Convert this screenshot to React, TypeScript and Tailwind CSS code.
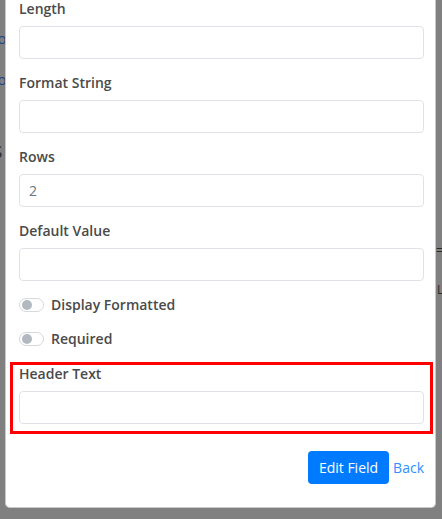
import React from "react";

const font = { fontFamily: '"Open Sans", "Noto Sans", sans-serif' };

function Field({ label, value }: { label: string; value?: string }) {
    return (
        <div className="mb-[13px]">
            <label className="block text-[14px] leading-[21px] font-semibold text-[#4a4a4a] mb-[7px]">{label}</label>
            <input
                readOnly
                value={value ?? ""}
                className="block w-full h-[33px] px-[9px] rounded-[4px] border border-[#dfe3e8] bg-white text-[14px] text-[#6c757d] outline-none"
            />
        </div>
    );
}

function Toggle({ label }: { label: string }) {
    return (
        <div className="mb-[13px] flex items-center h-[21px]">
            <span className="flex items-center w-[25px] h-[14px] px-[2px] rounded-full border border-[#d4d9de] bg-white">
                <span className="w-[10px] h-[10px] rounded-full bg-[#b3b9c0]" />
            </span>
            <span className="ml-[7px] text-[14px] font-semibold text-[#4a4a4a]">{label}</span>
        </div>
    );
}

export default function App() {
    return (
        <div className="relative w-[442px] h-[519px] overflow-hidden bg-[#808080]" style={font}>
            {/* page behind the backdrop, mostly hidden */}
            <span className="absolute left-[-12px] top-[27px] text-[15px] text-[#20407f]">Co</span>
            <span className="absolute left-[-12px] top-[68px] text-[15px] text-[#20407f]">Co</span>
            <span className="absolute left-[-7px] top-[139px] text-[17px] text-[#2a2a2a]">S</span>
            <span className="absolute left-[436px] top-[242px] text-[12px] text-[#2a2a2a]">=</span>
            <span className="absolute left-[437px] top-[281px] text-[12px] text-[#2a2a2a]">L</span>

            <div className="relative ml-[5px] w-[431px] h-[510px] bg-white rounded-b-[5px] border-x border-b border-[#c8c8c8] pl-[13px] pr-[11px] -mt-[2px]">
                <Field label="Length" />
                <Field label="Format String" />
                <Field label="Rows" value="2" />
                <Field label="Default Value" />
                <Toggle label="Display Formatted" />
                <Toggle label="Required" />

                <div className="-mx-[9px] border-[3px] border-[#ff0000] px-[6px] pb-[7px]">
                    <label className="block -mt-[2px] text-[14px] leading-[21px] font-semibold text-[#4a4a4a] mb-[7px]">Header Text</label>
                    <input
                        readOnly
                        value=""
                        className="block w-full h-[33px] px-[9px] rounded-[4px] border border-[#dfe3e8] bg-white text-[14px] outline-none"
                    />
                </div>

                <div className="mt-[17px] flex items-center justify-end">
                    <button className="h-[33px] px-[11px] rounded-[4px] bg-[#007bff] text-white text-[14px]">Edit Field</button>
                    <a className="ml-[4px] text-[14px] text-[#2f8fff]">Back</a>
                </div>
            </div>
        </div>
    );
}
